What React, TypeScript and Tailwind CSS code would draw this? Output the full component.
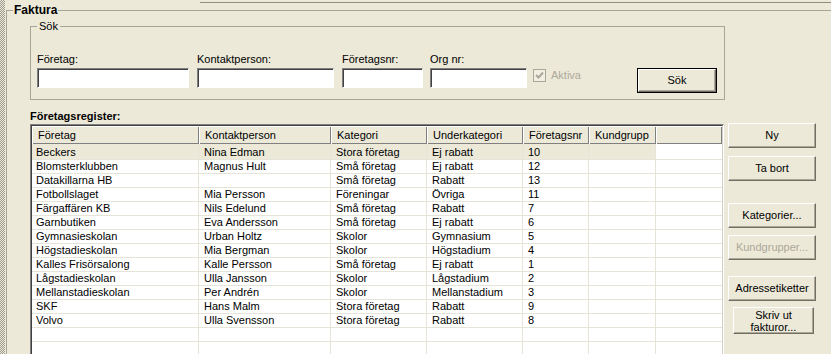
import clsx from 'clsx'

// Kolumner i företagsregistret
const colW = ['w-[167px]', 'w-[132px]', 'w-[96px]', 'w-[96px]', 'w-[66px]', 'w-[67px]']
const headers = ['Företag', 'Kontaktperson', 'Kategori', 'Underkategori', 'Företagsnr', 'Kundgrupp']

type Row = [string, string, string, string, string]

const rows: Row[] = [
  ['Beckers', 'Nina Edman', 'Stora företag', 'Ej rabatt', '10'],
  ['Blomsterklubben', 'Magnus Hult', 'Små företag', 'Ej rabatt', '12'],
  ['Datakillarna HB', '', 'Små företag', 'Rabatt', '13'],
  ['Fotbollslaget', 'Mia Persson', 'Föreningar', 'Övriga', '11'],
  ['Färgaffären KB', 'Nils Edelund', 'Små företag', 'Rabatt', '7'],
  ['Garnbutiken', 'Eva Andersson', 'Små företag', 'Ej rabatt', '6'],
  ['Gymnasieskolan', 'Urban Holtz', 'Skolor', 'Gymnasium', '5'],
  ['Högstadieskolan', 'Mia Bergman', 'Skolor', 'Högstadium', '4'],
  ['Kalles Frisörsalong', 'Kalle Persson', 'Små företag', 'Ej rabatt', '1'],
  ['Lågstadieskolan', 'Ulla Jansson', 'Skolor', 'Lågstadium', '2'],
  ['Mellanstadieskolan', 'Per Andrén', 'Skolor', 'Mellanstadium', '3'],
  ['SKF', 'Hans Malm', 'Stora företag', 'Rabatt', '9'],
  ['Volvo', 'Ulla Svensson', 'Stora företag', 'Rabatt', '8'],
  ['', '', '', '', ''],
  ['', '', '', '', ''],
]

// ---- Klassisk Windows-knapp ----
function WinButton({
  children,
  disabled,
  className,
}: {
  children: React.ReactNode
  disabled?: boolean
  className?: string
}) {
  return (
    <button
      type="button"
      className={clsx(
        'flex shrink-0 items-center justify-center border border-t-white border-l-white border-b-[#716f64] border-r-[#716f64] bg-[#ece9d8] text-center shadow-[inset_-1px_-1px_0_#aca899]',
        disabled ? 'text-[#aca899]' : 'text-black',
        className
      )}
    >
      {children}
    </button>
  )
}

function TextBox({ className }: { className: string }) {
  return (
    <input
      type="text"
      readOnly
      className={clsx(
        'block h-[20px] border border-t-[#808080] border-l-[#808080] border-b-white border-r-white bg-white shadow-[inset_1px_1px_0_#404040] outline-none',
        className
      )}
    />
  )
}

function Field({ label, wrap, input }: { label: string; wrap: string; input: string }) {
  return (
    <div className={clsx('flex shrink-0 flex-col gap-[2px]', wrap)}>
      <span>{label}</span>
      <TextBox className={input} />
    </div>
  )
}

export default function App() {
  return (
    <div className="flex h-[354px] w-[831px] overflow-hidden bg-[#ece9d8] font-[family-name:Liberation_Sans,Arial,sans-serif] text-[11px] leading-[13px] text-black">
      {/* rastrerad kant till vänster */}
      <div className="h-full w-[5px] shrink-0 bg-[image:repeating-conic-gradient(#9c9b90_0_25%,#ece9d8_0_50%)] bg-[length:2px_2px]" />

      <div className="flex min-w-0 flex-1 flex-col">
        <div className="h-[3px] shrink-0">
          <div className="ml-[195px] h-[3px] border-b border-[#8e8d82]" />
        </div>

        <fieldset className="mt-[1px] ml-[1px] min-w-0 flex-1 border-0 border-t border-l border-[#a6a597] pt-[3px] pl-[4px]">
          <legend className="ml-[2px] px-[1px] text-[12px] font-bold leading-[13px]">Faktura</legend>

          <div className="pl-[19px]">
            {/* ---- Sök ---- */}
            <fieldset className="w-[695px] border border-[#a6a597] pt-[20px] pb-[6px] pl-[6px]">
              <legend className="px-[2px] leading-[13px]">Sök</legend>
              <div className="flex items-start">
                <Field label="Företag:" wrap="w-[160px]" input="w-[152px]" />
                <Field label="Kontaktperson:" wrap="w-[145px]" input="w-[137px]" />
                <Field label="Företagsnr:" wrap="w-[88px]" input="w-[81px]" />
                <Field label="Org nr:" wrap="w-[103px]" input="w-[97px]" />
                <div className="mt-[16px] flex w-[104px] shrink-0 items-center gap-[5px]">
                  <div className="flex h-[13px] w-[13px] items-center justify-center border border-[#aca899] bg-[#f1efe2]">
                    <svg width="9" height="9" viewBox="0 0 9 9">
                      <path d="M1 4 L3.5 6.5 L8 1.5" fill="none" stroke="#aca899" strokeWidth="2" />
                    </svg>
                  </div>
                  <span className="text-[#aca899]">Aktiva</span>
                </div>
                <div className="mt-[15px] shrink-0 border border-black">
                  <WinButton className="h-[23px] w-[78px]">Sök</WinButton>
                </div>
              </div>
            </fieldset>

            {/* ---- Företagsregister ---- */}
            <div className="mt-[10px] flex items-start">
              <div className="flex flex-col">
                <span className="font-bold">Företagsregister:</span>
                <div className="mt-[1px] h-[240px] w-[694px] border-t border-l border-r border-[#808080] border-r-white">
                  <div className="h-full overflow-hidden border-t border-l border-r border-[#404040] border-r-[#d4d0c8] bg-white">
                    <div className="flex h-[18px]">
                      {headers.map((h, i) => (
                        <div
                          key={h}
                          className={clsx(
                            'shrink-0 bg-[#ece9d8] pl-[6px] leading-[18px] shadow-[inset_1px_1px_0_#fff,inset_-1px_-1px_0_#808080]',
                            colW[i]
                          )}
                        >
                          {h}
                        </div>
                      ))}
                      <div className="flex-1 bg-[#ece9d8] shadow-[inset_1px_1px_0_#fff,inset_-1px_-1px_0_#808080]" />
                    </div>

                    {rows.map((r, ri) => (
                      <div
                        key={ri}
                        className={clsx(
                          'flex border-b border-[#e6e4d8]',
                          ri === 0 ? 'h-[16px]' : 'h-[14px]'
                        )}
                      >
                        {r.concat('').map((c, ci) => (
                          <div
                            key={ci}
                            className={clsx(
                              'h-full shrink-0 overflow-hidden whitespace-nowrap border-r border-[#e6e4d8]',
                              ci === 0 ? 'pl-[4px]' : 'pl-[5px]',
                              ri === 0 && 'bg-[#ece9d8] pt-[2px]',
                              colW[ci]
                            )}
                          >
                            {c}
                          </div>
                        ))}
                        <div className="h-full flex-1" />
                      </div>
                    ))}
                  </div>
                </div>
              </div>

              {/* ---- Knappar ---- */}
              <div className="ml-[4px] flex w-[88px] flex-col">
                <WinButton className="mt-[13px] h-[25px] w-[88px]">Ny</WinButton>
                <WinButton className="mt-[8px] h-[25px] w-[88px]">Ta bort</WinButton>
                <WinButton className="mt-[22px] h-[25px] w-[88px]">Kategorier...</WinButton>
                <WinButton disabled className="mt-[7px] h-[25px] w-[88px]">Kundgrupper...</WinButton>
                <WinButton className="mt-[16px] h-[25px] w-[88px]">Adressetiketter</WinButton>
                <WinButton className="mt-[6px] ml-[5px] h-[27px] w-[81px] flex-col leading-[12px]">
                  <span>Skriv ut</span>
                  <span>fakturor...</span>
                </WinButton>
              </div>
            </div>
          </div>
        </fieldset>
      </div>
    </div>
  )
}
